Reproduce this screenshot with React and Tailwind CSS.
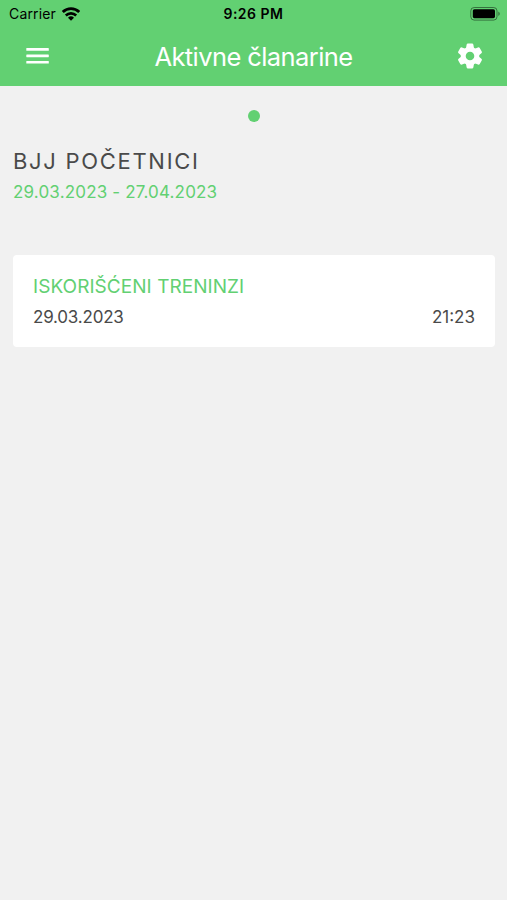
import React from "react";

const sessions = [{ date: "29.03.2023", time: "21:23" }];

const toothAngles = [0, 60, 120, 180, 240, 300];

const WifiIcon = () => (
  <svg viewBox="0 0 18 14" className="h-[14px] w-[18px]" fill="none" stroke="#000">
    <path d="M.8 5a11.8 11.8 0 0 1 16.4 0" strokeWidth="2.8" />
    <path d="M3.8 8.5a7.4 7.4 0 0 1 10.4 0" strokeWidth="2.6" />
    <path d="M9 13.8 6 10.8a4.3 4.3 0 0 1 6 0z" fill="#000" stroke="none" />
  </svg>
);

const BatteryIcon = () => (
  <svg viewBox="0 0 31 14" className="h-[14px] w-[31px]">
    <rect x="0.8" y="0.5" width="26.2" height="12.6" rx="3.4" fill="none" stroke="#000" strokeOpacity="0.45" />
    <rect x="2.8" y="2.2" width="22.2" height="9" rx="1.6" />
    <path d="M28.3 4.6c2 .8 2 3.6 0 4.4z" fillOpacity="0.45" />
  </svg>
);

const MenuIcon = () => (
  <svg viewBox="0 0 30 30" className="size-[30px]" fill="#fff">
    <rect x="4.3" y="7.1" width="22.5" height="2.7" rx="0.4" />
    <rect x="4.3" y="13.5" width="22.5" height="2.7" rx="0.4" />
    <rect x="4.3" y="19.9" width="22.5" height="2.7" rx="0.4" />
  </svg>
);

const GearIcon = () => (
  <svg viewBox="-15 -15 30 30" className="size-[30px]" fill="#fff">
    <circle r="6.8" fill="none" stroke="#fff" strokeWidth="5" />
    {toothAngles.map((angle) => (
      <path
        key={angle}
        d="M-4.1 -7 L-3.4 -11.2 Q-3.2 -12.4 -2 -12.4 H2 Q3.2 -12.4 3.4 -11.2 L4.1 -7z"
        transform={`rotate(${angle})`}
      />
    ))}
  </svg>
);

const StatusBar = () => (
  <div className="grid h-[27px] grid-cols-3 items-center pl-[9px] pr-[6px] text-black">
    <div className="flex items-center gap-[6px] text-[14px] tracking-[0.15px]">
      <span>Carrier</span>
      <WifiIcon />
    </div>
    <span className="pr-[3px] text-center text-[14px] font-semibold tracking-[0.5px]">9:26 PM</span>
    <div className="flex justify-end">
      <BatteryIcon />
    </div>
  </div>
);

const App = () => {
  return (
    <div className="min-h-screen bg-[#f1f1f1] font-[Inter,sans-serif] text-[#4a4a4a]">
      <header className="h-[86px] bg-[#62d072]">
        <StatusBar />
        <div className="flex h-[58px] items-center justify-between px-[22px]">
          <button type="button" aria-label="Menu">
            <MenuIcon />
          </button>
          <h1 className="pt-0.5 text-[25.5px] font-[370] tracking-[-0.58px] text-white">Aktivne članarine</h1>
          <button type="button" aria-label="Settings">
            <GearIcon />
          </button>
        </div>
      </header>

      <main className="pl-[13px] pr-3 pt-6">
        <div className="mx-auto size-3 rounded-full bg-[#62d072]" />
        <h2 className="mt-[24px] text-[22px] font-[370] leading-[30px] tracking-[1.7px]">BJJ POČETNICI</h2>
        <p className="mt-[4px] text-[17px] leading-[24px] tracking-[0.17px] text-[#62d072]">29.03.2023 - 27.04.2023</p>

        <section className="mt-[51px] h-[92px] rounded-[4px] bg-white px-5 pt-[18px]">
          <h3 className="text-[19px] font-[370] leading-[28px] tracking-[0.05px] text-[#62d072]">ISKORIŠĆENI TRENINZI</h3>
          <ul>
            {sessions.map(({ date, time }) => (
              <li key={date} className="mt-[3px] flex justify-between text-[17px] leading-[26px]">
                <span className="tracking-[-0.2px]">{date}</span>
                <span>{time}</span>
              </li>
            ))}
          </ul>
        </section>
      </main>
    </div>
  );
};

export default App;
